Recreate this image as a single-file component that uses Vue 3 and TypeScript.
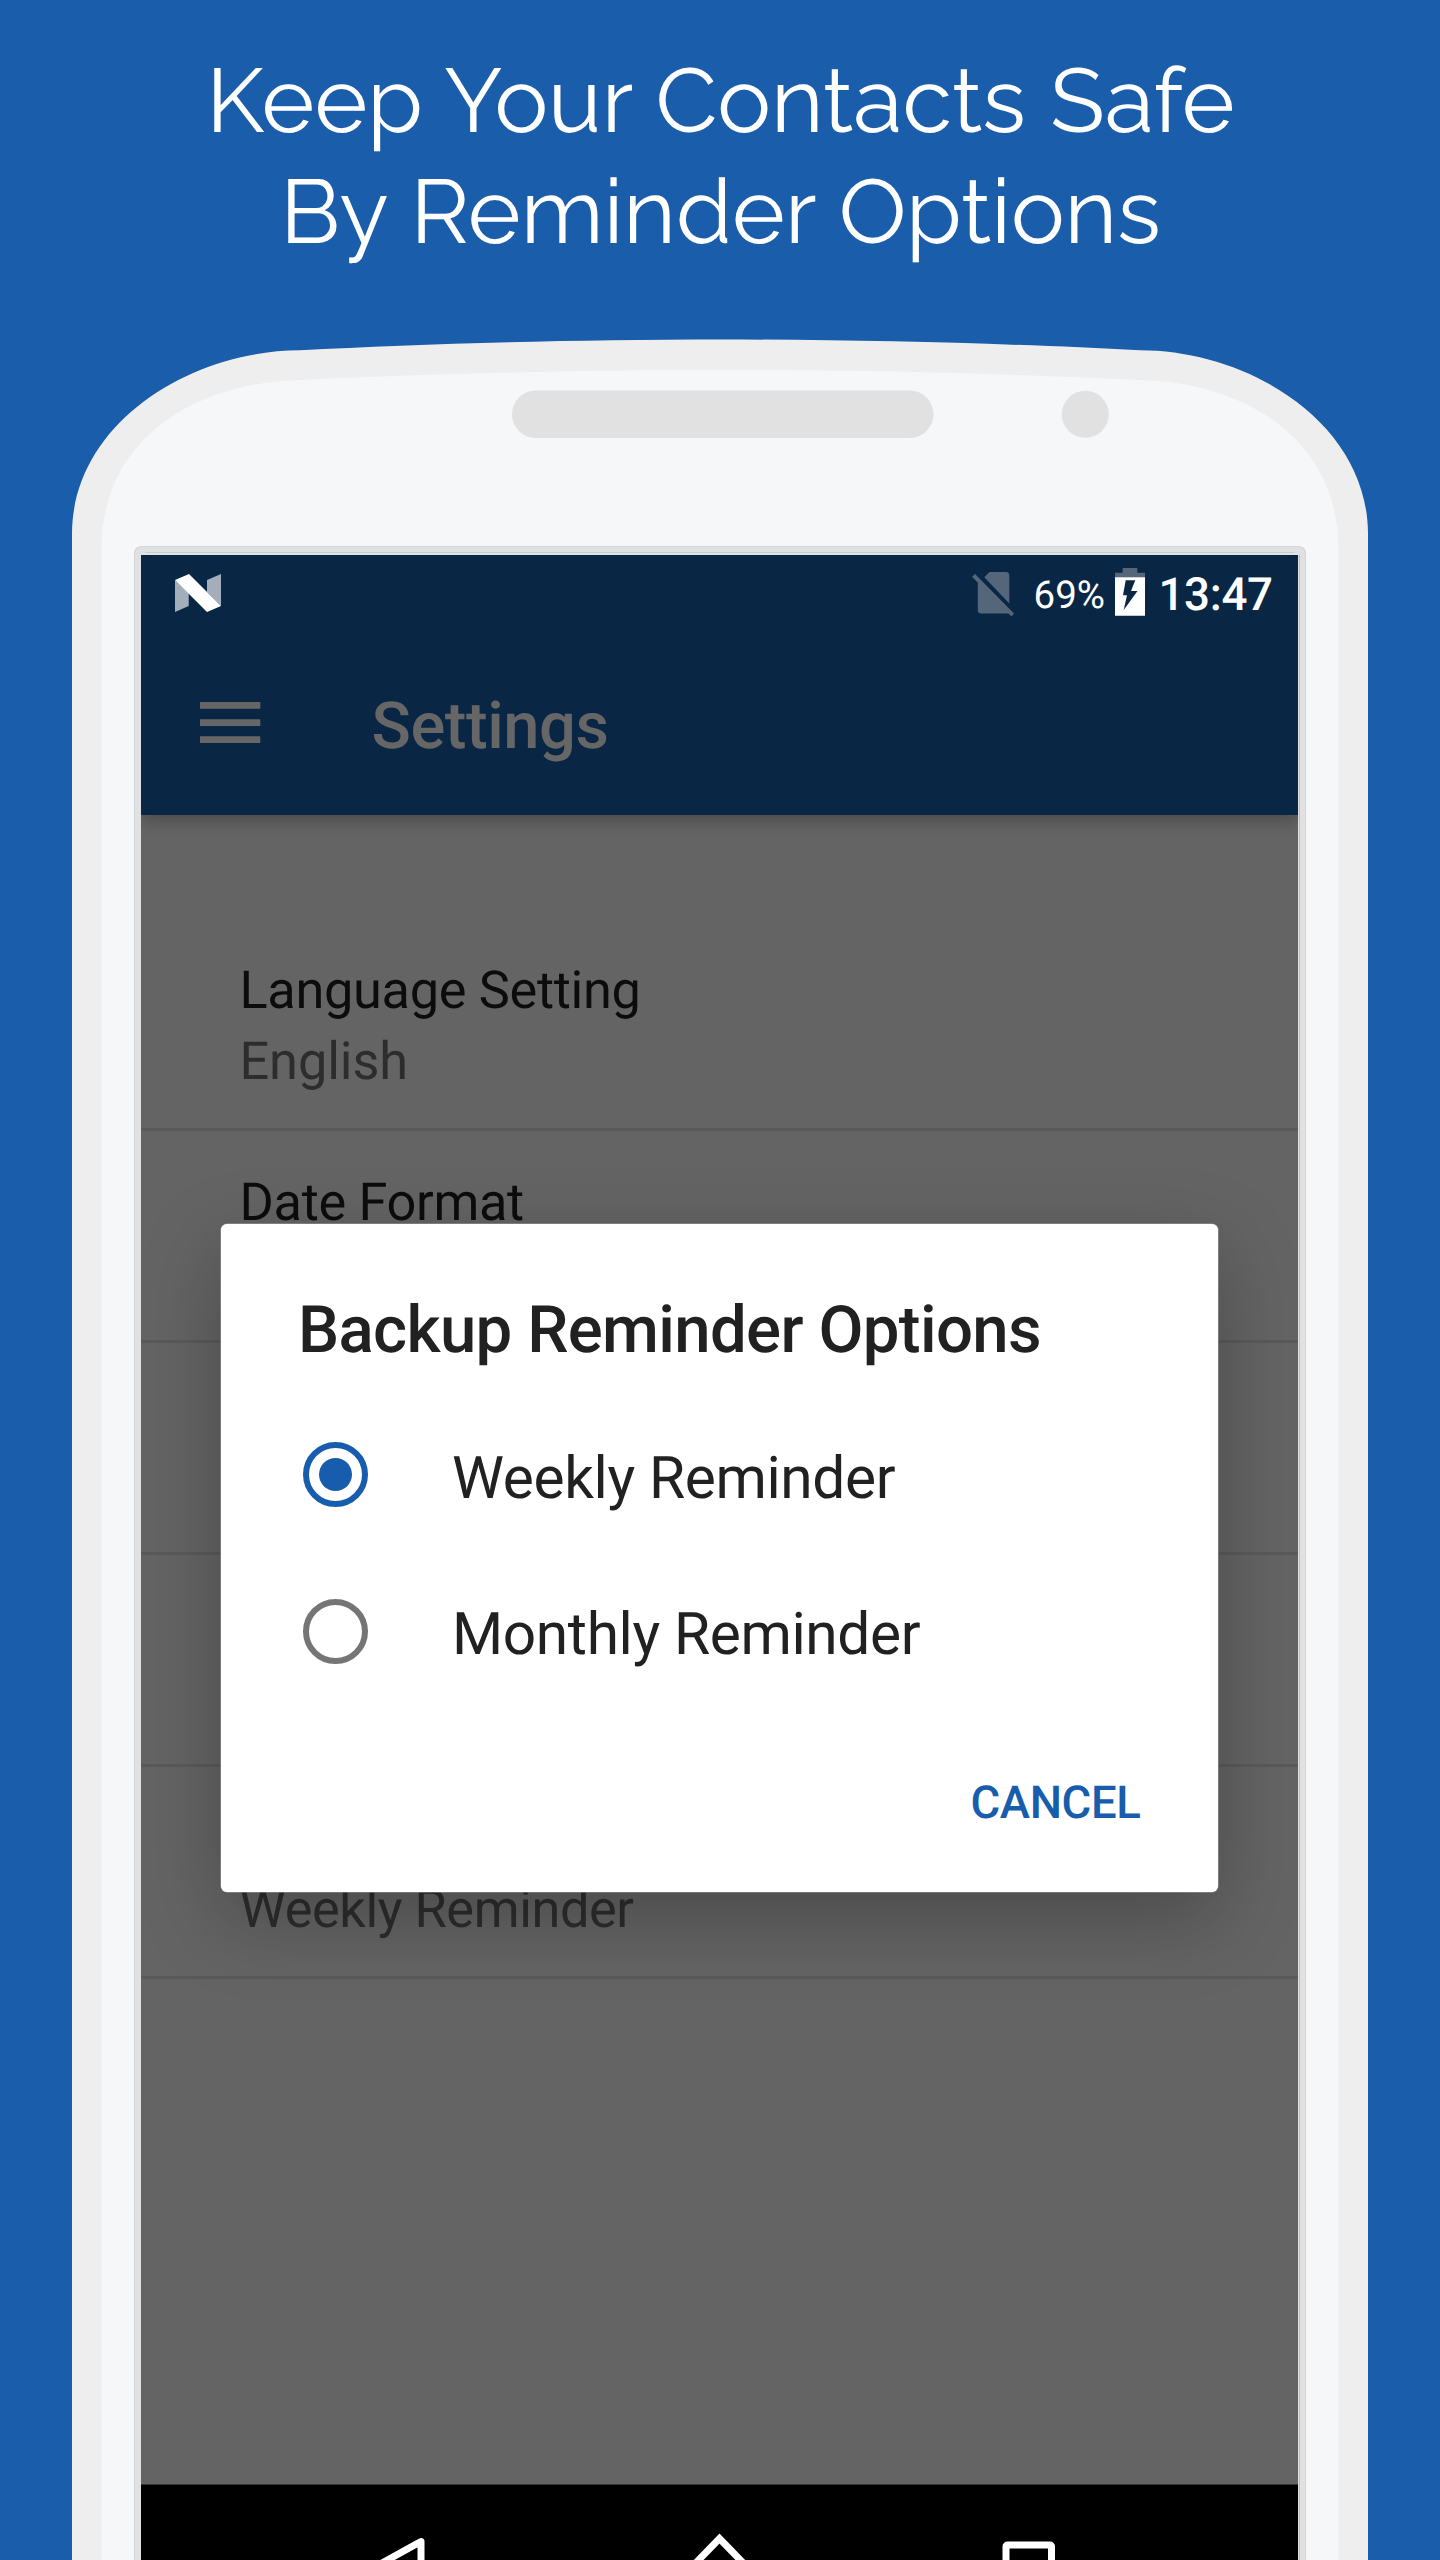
<script setup lang="ts">
import { ref } from 'vue'

interface Setting {
  title: string
  value: string
}

interface ReminderOption {
  id: string
  label: string
}

const headline: string[] = ['Keep Your Contacts Safe', 'By Reminder Options']

const settings: Setting[] = [
  { title: 'Language Setting', value: 'English' },
  { title: 'Date Format', value: '' },
  { title: '', value: '' },
  { title: '', value: '' },
  { title: '', value: 'Weekly Reminder' },
]

const options: ReminderOption[] = [
  { id: 'weekly', label: 'Weekly Reminder' },
  { id: 'monthly', label: 'Monthly Reminder' },
]

const selected = ref('weekly')
</script>

<template>
  <div class="page">
    <svg class="shell" width="1440" height="2560" viewBox="0 0 1440 2560" aria-hidden="true">
      <path
        fill="#eeeeee"
        d="M72 2560V533C73 423 190 350.500 300 350.300C420 344 570 339.500 720 339.500S1020 344 1140 350.300C1250 350.500 1367 423 1368 533V2560Z"
      />
      <path
        fill="#f6f7f9"
        d="M101.500 2560V550C101.500 430 208 381 302 380C420 374 570 370 720 370S1020 374 1138 380C1232 381 1338.500 430 1338.500 550V2560Z"
      />
      <rect x="512" y="390.500" width="421.500" height="47.500" rx="23.700" fill="#e1e1e1" />
      <circle cx="1085.300" cy="414.300" r="23.500" fill="#e1e1e1" />
      <path d="M134 2560V554Q134 546 142 546H1298Q1306 546 1306 554V2560Z" fill="#cfd6de" />
      <path d="M135 2560V554.500Q135 547 142.500 547H1297.500Q1305 547 1305 554.500V2560Z" fill="#e1e1e1" />
      <path d="M145 552.500H1295" stroke="#c3cee2" />
      <path d="M141 554H1298" stroke="#e3e5dc" stroke-width="2" />
      <path d="M1299.500 555V2560" stroke="#bdbdbd" />
    </svg>

    <header class="headline">
      <div v-for="line in headline" :key="line">{{ line }}</div>
    </header>

    <main class="screen">
      <div class="status">
        <svg class="nougat" width="46" height="38" viewBox="0 0 46 38">
          <path d="M0 6L13.700 19V32L0 38Z M32 6L46 0V32L32 18Z" fill="#a4aebb" />
          <path d="M0 6L14 0L46 32L32 38Z" fill="#fff" />
        </svg>
        <svg class="sim" width="42" height="46" viewBox="0 0 42 46" fill="#546679">
          <path d="M12.300 7.300L17.500 2H34Q37.300 2 37.300 5.500V33.500Z" />
          <path d="M5.800 12L37 43.500H9.500Q5.800 43.500 5.800 40Z" />
          <path d="M0 6.700L3 4L42 43.500L39.500 46.500Z" />
        </svg>
        <span class="percent">69%</span>
        <svg class="battery" width="30" height="48" viewBox="0 0 30 48">
          <path d="M0 9.500V4.700H7.700V0H22.300V4.700H30V9.500Z" fill="#546679" />
          <path
            fill="#fff"
            fill-rule="evenodd"
            d="M0 9.300H30V47.700H0Z M10.700 12.300L8 27.300H12L8.700 42L22.500 23H16L20.300 12.300Z"
          />
        </svg>
        <span class="clock">13:47</span>
      </div>

      <div class="appbar">
        <svg class="menu" width="61" height="41" viewBox="0 0 61 41">
          <path d="M0 0H60.300V6.700H0Z M0 17.200H60.300V23.900H0Z M0 34.300H60.300V41H0Z" fill="#666" />
        </svg>
        <span class="title">Settings</span>
      </div>

      <div class="list">
        <section v-for="(item, i) in settings" :key="i" class="row">
          <div class="name">{{ item.title }}</div>
          <div class="value" :class="{ tight: item.value.length > 8 }">{{ item.value }}</div>
        </section>
      </div>

      <nav class="navbar">
        <svg width="1157" height="75" viewBox="0 1 1157 75" fill="none" stroke="#fff" stroke-width="7">
          <path d="M280 120V57.500L213 94.500" stroke-linejoin="round" />
          <path d="M548 86L578.500 54.500L609 86" />
          <rect x="865" y="61" width="45.500" height="46" rx="1.500" />
        </svg>
      </nav>

      <div class="dialog" role="dialog">
        <h2>Backup Reminder Options</h2>
        <label v-for="o in options" :key="o.id" class="option" @click="selected = o.id">
          <span class="radio" :class="{ on: selected === o.id }"></span>
          <span class="label">{{ o.label }}</span>
        </label>
        <div class="actions"><span>CANCEL</span></div>
      </div>
    </main>
  </div>
</template>

<style>
body {
  background: #1a5dab;
}
</style>

<style scoped>
.page {
  position: relative;
  box-sizing: border-box;
  width: 1440px;
  height: 2560px;
  overflow: hidden;
  background: #1a5dab;
  font-family: Roboto, sans-serif;
  text-rendering: geometricPrecision;
}
.shell {
  position: absolute;
  inset: 0;
}
.headline {
  box-sizing: border-box;
  height: 555px;
  padding: 46px 0 0 1px;
  font: 400 90.2px/111px Raleway, Lato, sans-serif;
  color: #fff;
  word-spacing: 1.2px;
  text-align: center;
}
.screen {
  position: relative;
  display: flex;
  flex-direction: column;
  width: 1157px;
  height: 2005px;
  margin-left: 141px;
  overflow: hidden;
  background: #646464;
}
.status {
  position: relative;
  z-index: 2;
  display: flex;
  align-items: flex-start;
  box-sizing: border-box;
  height: 79px;
  padding: 0 26px 0 34px;
  color: #fff;
  background: #092744;
}
.nougat {
  margin-top: 19px;
}
.sim {
  margin: 15px 20px 0 auto;
}
.percent {
  width: 81px;
  font-size: 38.5px;
  line-height: 81px;
}
.battery {
  margin-top: 13px;
}
.clock {
  width: 113.5px;
  margin-left: 14px;
  font-size: 45.7px;
  font-weight: 500;
  line-height: 82px;
  letter-spacing: -0.35px;
}
.appbar {
  position: relative;
  z-index: 1;
  display: flex;
  align-items: flex-start;
  box-sizing: border-box;
  height: 181px;
  padding: 68px 0 0 59px;
  background: #092744;
  box-shadow: 0 6px 14px rgba(0, 0, 0, 0.24);
}
.title {
  margin: -15px 0 0 110.5px;
  color: #666;
  font-size: 65px;
  font-weight: 500;
  line-height: 78px;
  letter-spacing: -0.45px;
}
.list {
  flex: 1;
  padding-top: 104px;
}
.row {
  box-sizing: border-box;
  height: 212px;
  padding: 36px 0 0 98.5px;
  border-bottom: 3px solid #5a5a5a;
  font-size: 52.3px;
  line-height: 70px;
}
.name {
  height: 71px;
  color: #0c0c0c;
  letter-spacing: -0.32px;
}
.value {
  height: 70px;
  color: #2d2d2d;
  letter-spacing: -0.1px;
}
.value.tight {
  letter-spacing: -0.42px;
}
.navbar {
  box-sizing: border-box;
  height: 76px;
  border-top: 1px solid #333;
  background: #000;
}
.dialog {
  position: absolute;
  top: 669px;
  left: 80px;
  box-sizing: border-box;
  width: 997px;
  height: 668px;
  padding: 64px 77.5px 0 77px;
  border-radius: 6px;
  background: #fff;
  box-shadow:
    0 0 0 0.5px #a0a0a0,
    0 26px 80px rgba(0, 0, 0, 0.26);
}
h2 {
  margin: 0 0 26px;
  color: #212121;
  font-size: 65.3px;
  font-weight: 500;
  line-height: 84px;
  letter-spacing: -0.65px;
  white-space: nowrap;
}
.option {
  display: flex;
  align-items: center;
  height: 156.5px;
  padding-left: 5px;
}
.radio {
  display: grid;
  place-items: center;
  box-sizing: border-box;
  width: 65px;
  height: 65px;
  margin-top: -3px;
  border: 6.5px solid #757575;
  border-radius: 50%;
}
.radio.on {
  border-color: #185dad;
}
.radio.on::after {
  width: 33px;
  height: 33px;
  border-radius: 50%;
  background: #185dad;
  content: '';
}
.label {
  margin: 5px 0 0 84px;
  color: #212121;
  font-size: 58.6px;
  line-height: 70px;
  letter-spacing: -0.36px;
}
.actions {
  margin-top: 63px;
  color: #185dad;
  font-size: 45.5px;
  font-weight: 500;
  line-height: 60px;
  letter-spacing: -0.35px;
  text-align: right;
}
</style>
